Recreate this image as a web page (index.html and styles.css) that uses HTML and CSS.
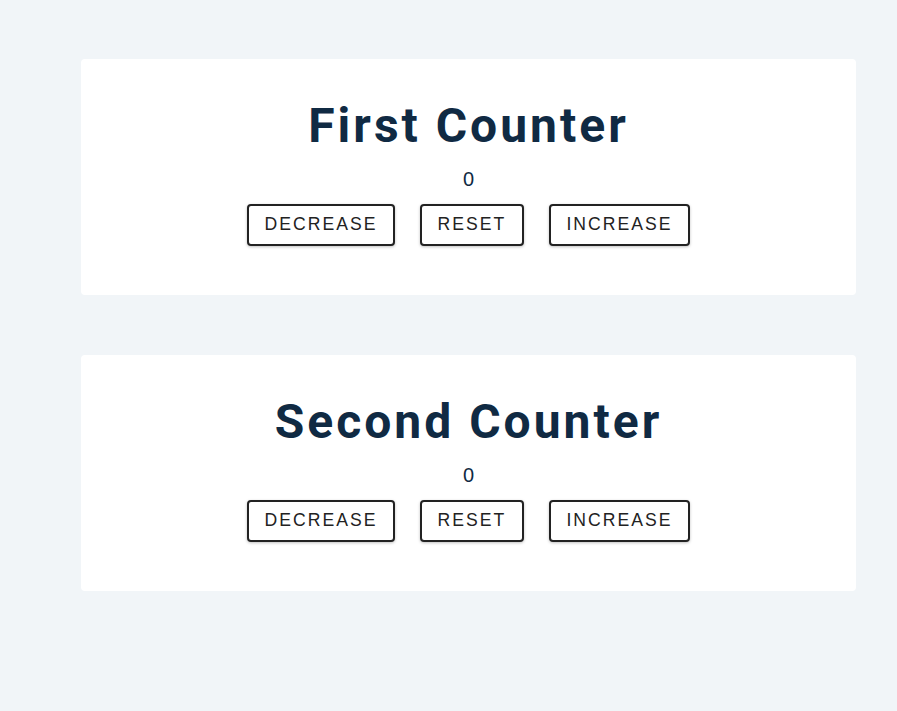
FILE: index.html
```html
<!DOCTYPE html>
<html>
<head>
<meta charset="utf-8">
<link rel="stylesheet" href="styles.css">
</head>
<body>
<main class="page">
  <section class="card">
    <h1 class="title">First Counter</h1>
    <p class="value">0</p>
    <div class="actions">
      <button class="btn">DECREASE</button>
      <button class="btn">RESET</button>
      <button class="btn">INCREASE</button>
    </div>
  </section>
  <section class="card">
    <h1 class="title">Second Counter</h1>
    <p class="value">0</p>
    <div class="actions">
      <button class="btn">DECREASE</button>
      <button class="btn">RESET</button>
      <button class="btn">INCREASE</button>
    </div>
  </section>
</main>
</body>
</html>
```
FILE: styles.css
```css
html, body {
  margin: 0;
  padding: 0;
  background: #f1f5f8;
}
body {
  font-family: "Liberation Sans", Arial, sans-serif;
  color: #102a43;
}
.page {
  display: flex;
  flex-direction: column;
  gap: 60px;
  padding: 59px 41px 0 81px;
}
.card {
  background: #fff;
  border-radius: 4px;
  padding: 39px 0 50px;
  height: 236px;
  box-sizing: border-box;
  display: flex;
  flex-direction: column;
  align-items: center;
}
.title {
  margin: 0;
  font-family: Roboto, sans-serif;
  font-weight: 700;
  font-size: 48px;
  letter-spacing: 3px;
  line-height: 56px;
  color: #102a43;
}
.value {
  margin: 13px 0 13px;
  font-size: 20px;
  line-height: 24px;
  color: #102a43;
}
.actions {
  display: flex;
  gap: 25px;
}
.btn {
  font-family: "Liberation Sans", Arial, sans-serif;
  font-size: 17.6px;
  letter-spacing: 2px;
  color: #222;
  background: #fff;
  border: 2px solid #222;
  border-radius: 4px;
  padding: 0 15.6px 1px;
  height: 42px;
  box-shadow: 0 1px 3px rgba(0,0,0,0.25);
  cursor: pointer;
}
```
